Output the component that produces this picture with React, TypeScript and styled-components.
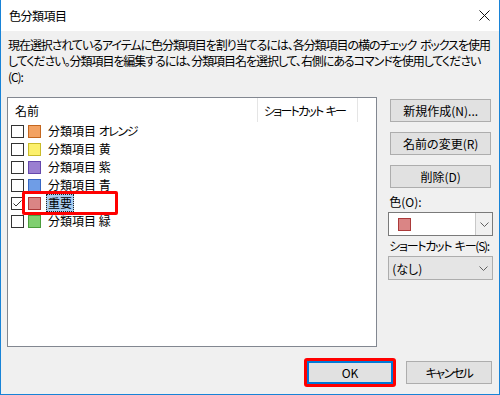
import styled, { createGlobalStyle } from 'styled-components';

const GlobalStyle = createGlobalStyle`
  html, body {
    margin: 0;
    padding: 0;
    background: #ffffff;
  }
  body {
    font-family: "Noto Sans CJK JP", "Noto Sans", sans-serif;
    font-size: 12px;
    color: #000;
    font-feature-settings: "palt";
  }
`;

const Window = styled.div`
  width: 500px;
  height: 395px;
  box-sizing: border-box;
  border: 1px solid #1883d7;
  border-top: none;
  background: #f0f0f0;
  display: flex;
  flex-direction: column;
  overflow: hidden;
`;

const TitleBar = styled.div`
  height: 31px;
  flex: none;
  background: #fff;
  display: flex;
  align-items: center;
  justify-content: space-between;
  padding-left: 8px;
`;

const Title = styled.span`
  font-size: 12px;
  line-height: 16px;
  letter-spacing: -0.5px;
`;

const CloseIcon = styled.svg`
  width: 11px;
  height: 11px;
  margin-right: 9px;
`;

const Content = styled.div`
  flex: 1;
  padding: 6px 6px 0 6px;
  display: flex;
  flex-direction: column;
`;

const Description = styled.p`
  margin: 0 0 12px 1px;
  line-height: 16px;
  height: 48px;
  white-space: pre;
  letter-spacing: -1.05px;
  word-spacing: 2px;
`;

const MainRow = styled.div`
  display: flex;
  gap: 11px;
  height: 250px;
`;

const ListBox = styled.div`
  width: 371px;
  box-sizing: border-box;
  border: 1px solid #828790;
  background: #fff;
`;

const Header = styled.div`
  display: flex;
  height: 24px;
`;

const HeaderCell = styled.div<{ $w: number; $pad: number; $tight?: boolean }>`
  width: ${(p) => p.$w}px;
  box-sizing: border-box;
  padding-left: ${(p) => p.$pad}px;
  border-right: 1px solid #e5e5e5;
  display: flex;
  align-items: center;
  white-space: pre;
  letter-spacing: ${(p) => (p.$tight ? '-1.75px' : '0')};
  word-spacing: ${(p) => (p.$tight ? '2px' : '0')};
`;

const Row = styled.div`
  position: relative;
  height: 18px;
  display: flex;
  align-items: center;
  padding-left: 3px;
`;

const CheckBox = styled.span`
  width: 13px;
  height: 13px;
  box-sizing: border-box;
  border: 1px solid #333;
  background: #fff;
  display: flex;
  align-items: center;
  justify-content: center;
`;

const Swatch = styled.span<{ $fill: string; $edge: string; $left?: number }>`
  width: 13px;
  height: 13px;
  box-sizing: border-box;
  background: ${(p) => p.$fill};
  border: 1px solid ${(p) => p.$edge};
  margin-left: ${(p) => p.$left ?? 4}px;
  flex: none;
`;

const ItemText = styled.span<{ $selected?: boolean }>`
  margin-left: 5px;
  padding: 0 1px;
  line-height: 16px;
  border: 1px dotted ${(p) => (p.$selected ? '#222' : 'transparent')};
  background: ${(p) => (p.$selected ? '#a8cdf0' : 'transparent')};
  white-space: pre;
`;

const Kana = styled.span`
  letter-spacing: -1.4px;
`;

const Highlight = styled.span`
  position: absolute;
  left: 14px;
  top: -3px;
  width: 96px;
  height: 24px;
  box-sizing: border-box;
  border: 3px solid #ff0000;
  border-radius: 2px;
  pointer-events: none;
`;

const SideColumn = styled.div`
  width: 105px;
  padding-top: 2px;
  display: flex;
  flex-direction: column;
`;

const Button = styled.button`
  height: 23px;
  box-sizing: border-box;
  background: #e1e1e1;
  border: 1px solid #adadad;
  border-radius: 0;
  padding: 0;
  font-family: inherit;
  font-size: 12px;
  color: #000;
  font-feature-settings: "palt";
  white-space: nowrap;
`;

const SideButton = styled(Button)`
  width: 101px;
  margin-left: 2px;
  margin-bottom: 10px;
`;

const FieldLabel = styled.div<{ $top: number; $tight?: boolean }>`
  margin-top: ${(p) => p.$top}px;
  margin-bottom: 2px;
  line-height: 16px;
  padding-left: 1px;
  white-space: pre;
  letter-spacing: ${(p) => (p.$tight ? '-1.25px' : '0')};
  word-spacing: ${(p) => (p.$tight ? '2px' : '0')};
`;

const ColorCombo = styled.div`
  height: 24px;
  box-sizing: border-box;
  border: 1px solid #7a7a7a;
  background: #fff;
  display: flex;
  align-items: center;
`;

const ComboArrow = styled.span`
  margin-left: auto;
  width: 17px;
  height: 100%;
  box-sizing: border-box;
  border-left: 1px solid #c8c8c8;
  background: #f0f0f0;
  display: flex;
  align-items: center;
  justify-content: center;
`;

const SelectCombo = styled.div`
  height: 24px;
  box-sizing: border-box;
  border: 1px solid #adadad;
  background: #e5e5e5;
  display: flex;
  align-items: center;
  padding-left: 3px;
  justify-content: space-between;
`;

const PlainArrow = styled.span`
  width: 17px;
  display: flex;
  justify-content: center;
`;

const Footer = styled.div`
  margin-top: 11px;
  display: flex;
  justify-content: flex-end;
  align-items: center;
  gap: 10px;
  padding-right: 1px;
`;

const OkFrame = styled.span`
  display: flex;
  border: 3px solid #ff0000;
  border-radius: 3px;
`;

const DialogButton = styled(Button)<{ $default?: boolean; $tight?: boolean }>`
  width: 86px;
  border: ${(p) => (p.$default ? '2px solid #0078d7' : '1px solid #adadad')};
  letter-spacing: ${(p) => (p.$tight ? '-1.5px' : '0')};
`;

const Chevron = () => (
  <svg width="9" height="5" viewBox="0 0 9 5">
    <polyline points="0.5,0.5 4.5,4.5 8.5,0.5" fill="none" stroke="#606060" strokeWidth="1" />
  </svg>
);

type Category = {
  name: string;
  suffix?: string;
  fill: string;
  edge: string;
  checked?: boolean;
  selected?: boolean;
};

const categories: Category[] = [
  { name: '分類項目 ', suffix: 'オレンジ', fill: '#f3a262', edge: '#c4671f' },
  { name: '分類項目 黄', fill: '#fcf06c', edge: '#c9bb2a' },
  { name: '分類項目 紫', fill: '#9a7fd1', edge: '#6548ad' },
  { name: '分類項目 青', fill: '#6f9de6', edge: '#3767c4' },
  { name: '重要', fill: '#da8585', edge: '#ab3a3a', checked: true, selected: true },
  { name: '分類項目 緑', fill: '#80cf70', edge: '#4b9c3b' },
];

export default function App() {
  return (
    <>
      <GlobalStyle />
      <Window>
        <TitleBar>
          <Title>色分類項目</Title>
          <CloseIcon viewBox="0 0 11 11">
            <path d="M0.5 0.5 L10.5 10.5 M10.5 0.5 L0.5 10.5" stroke="#111" strokeWidth="1" />
          </CloseIcon>
        </TitleBar>
        <Content>
          <Description>
            {'現在選択されているアイテムに色分類項目を割り当てるには、各分類項目の横のチェック ボックスを使用'}
            <br />
            {'してください。分類項目を編集するには、分類項目名を選択して、右側にあるコマンドを使用してください'}
            <br />
            (C):
          </Description>
          <MainRow>
            <ListBox>
              <Header>
                <HeaderCell $w={250} $pad={7}>名前</HeaderCell>
                <HeaderCell $w={100} $pad={6} $tight>ショートカット キー</HeaderCell>
              </Header>
              {categories.map((c) => (
                <Row key={c.name + (c.suffix ?? '')}>
                  <CheckBox>
                    {c.checked && (
                      <svg width="11" height="11" viewBox="0 0 11 11">
                        <polyline points="1.5,5.5 4,8 9.5,2.5" fill="none" stroke="#333" strokeWidth="1" />
                      </svg>
                    )}
                  </CheckBox>
                  <Swatch $fill={c.fill} $edge={c.edge} />
                  <ItemText $selected={c.selected}>
                    {c.name}
                    {c.suffix && <Kana>{c.suffix}</Kana>}
                  </ItemText>
                  {c.selected && <Highlight />}
                </Row>
              ))}
            </ListBox>
            <SideColumn>
              <SideButton>新規作成(N)...</SideButton>
              <SideButton>名前の変更(R)</SideButton>
              <SideButton>削除(D)</SideButton>
              <FieldLabel $top={-4}>色(O):</FieldLabel>
              <ColorCombo>
                <Swatch $fill="#da8585" $edge="#ab3a3a" $left={9} />
                <ComboArrow>
                  <Chevron />
                </ComboArrow>
              </ColorCombo>
              <FieldLabel $top={2} $tight>ショートカット キー(S):</FieldLabel>
              <SelectCombo>
                <span>(なし)</span>
                <PlainArrow>
                  <Chevron />
                </PlainArrow>
              </SelectCombo>
            </SideColumn>
          </MainRow>
          <Footer>
            <OkFrame>
              <DialogButton $default>OK</DialogButton>
            </OkFrame>
            <DialogButton $tight>キャンセル</DialogButton>
          </Footer>
        </Content>
      </Window>
    </>
  );
}
